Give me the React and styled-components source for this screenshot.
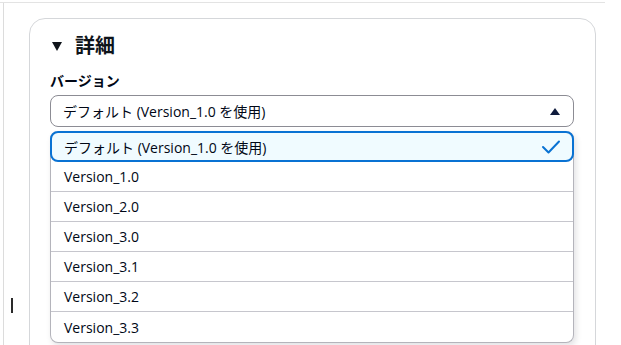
import React from "react";
import styled, { createGlobalStyle } from "styled-components";

const Global = createGlobalStyle`
  html, body { margin: 0; padding: 0; background: #fff; }
  body {
    font-family: "Open Sans", "Noto Sans CJK JP", sans-serif;
    color: #000716;
    overflow: hidden;
  }
`;

const Frame = styled.div`
  margin-top: 2px;
  width: 605px;
  height: 343px;
  box-sizing: border-box;
  border-top: 1px solid #e3e3e3;
  overflow: hidden;
`;

const Gutter = styled.div`
  position: relative;
  box-sizing: border-box;
  margin-left: 3px;
  border-left: 1px solid #dcdcdc;
  padding-left: 25px;
  padding-top: 15px;
  height: 100%;
`;

const Caret = styled.span`
  position: absolute;
  left: 7px;
  top: 295px;
  width: 2px;
  height: 15px;
  background: #2a2a2a;
`;

const Card = styled.section`
  box-sizing: border-box;
  width: 567px;
  height: 360px;
  border: 1px solid #d5d7da;
  border-radius: 16px;
  padding: 14px 21px 0 20px;
`;

const Header = styled.div`
  display: flex;
  align-items: center;
  gap: 13px;
  height: 26px;
  padding-left: 2px;
`;

const Title = styled.h2`
  margin: 0;
  font-size: 20px;
  font-weight: 700;
  line-height: 26px;
  color: #0f141a;
`;

const Label = styled.div`
  margin-top: 12px;
  font-size: 14px;
  font-weight: 700;
  line-height: 20px;
  color: #000716;
`;

const SelectWrap = styled.div`
  position: relative;
  margin-top: 4px;
`;

const Trigger = styled.div`
  display: flex;
  align-items: center;
  justify-content: space-between;
  height: 30px;
  border: 1px solid #8c8c94;
  border-radius: 8px;
  padding: 0 13px 0 12px;
  font-size: 14px;
`;

const Menu = styled.ul`
  position: absolute;
  left: 0;
  right: 0;
  top: 36px;
  margin: 0;
  padding: 0;
  list-style: none;
  background: #fff;
  border: 1px solid #b4b4bb;
  border-top: none;
  border-radius: 8px;
  box-shadow: 2px 3px 6px rgba(0, 7, 22, 0.12);
`;

const Item = styled.li`
  display: flex;
  align-items: center;
  justify-content: space-between;
  height: 30px;
  box-sizing: border-box;
  padding: 0 13px;
  font-size: 14px;
  border-bottom: 1px solid #c6c6cd;
  &:last-child { border-bottom: none; }
`;

const SelectedItem = styled(Item)`
  height: 31px;
  margin: 0 -1px;
  padding: 0 11px 0 12px;
  border: 2px solid #0972d3;
  border-radius: 8px;
  background: #f0fbff;
`;

const TriDown = () => (
  <svg width="10" height="9" viewBox="0 0 10 9">
    <path d="M0 0 H10 L5 9 Z" fill="#0f141a" />
  </svg>
);

const TriUp = () => (
  <svg width="10" height="7" viewBox="0 0 10 7">
    <path d="M0 7 H10 L5 0 Z" fill="#0f1b3d" />
  </svg>
);

const Check = () => (
  <svg width="20" height="16" viewBox="0 0 20 16">
    <path d="M2 8 L7.5 13.5 L18 2.5" fill="none" stroke="#0972d3" strokeWidth="2" strokeLinecap="round" strokeLinejoin="round" />
  </svg>
);

const versions = ["Version_1.0", "Version_2.0", "Version_3.0", "Version_3.1", "Version_3.2", "Version_3.3"];

export default function App() {
  return (
    <>
      <Global />
      <Frame>
        <Gutter>
          <Caret />
          <Card>
            <Header>
              <TriDown />
              <Title>詳細</Title>
            </Header>
            <Label>バージョン</Label>
            <SelectWrap>
              <Trigger>
                <span>デフォルト (Version_1.0 を使用)</span>
                <TriUp />
              </Trigger>
              <Menu>
                <SelectedItem>
                  <span>デフォルト (Version_1.0 を使用)</span>
                  <Check />
                </SelectedItem>
                {versions.map((v) => (
                  <Item key={v}>{v}</Item>
                ))}
              </Menu>
            </SelectWrap>
          </Card>
        </Gutter>
      </Frame>
    </>
  );
}
